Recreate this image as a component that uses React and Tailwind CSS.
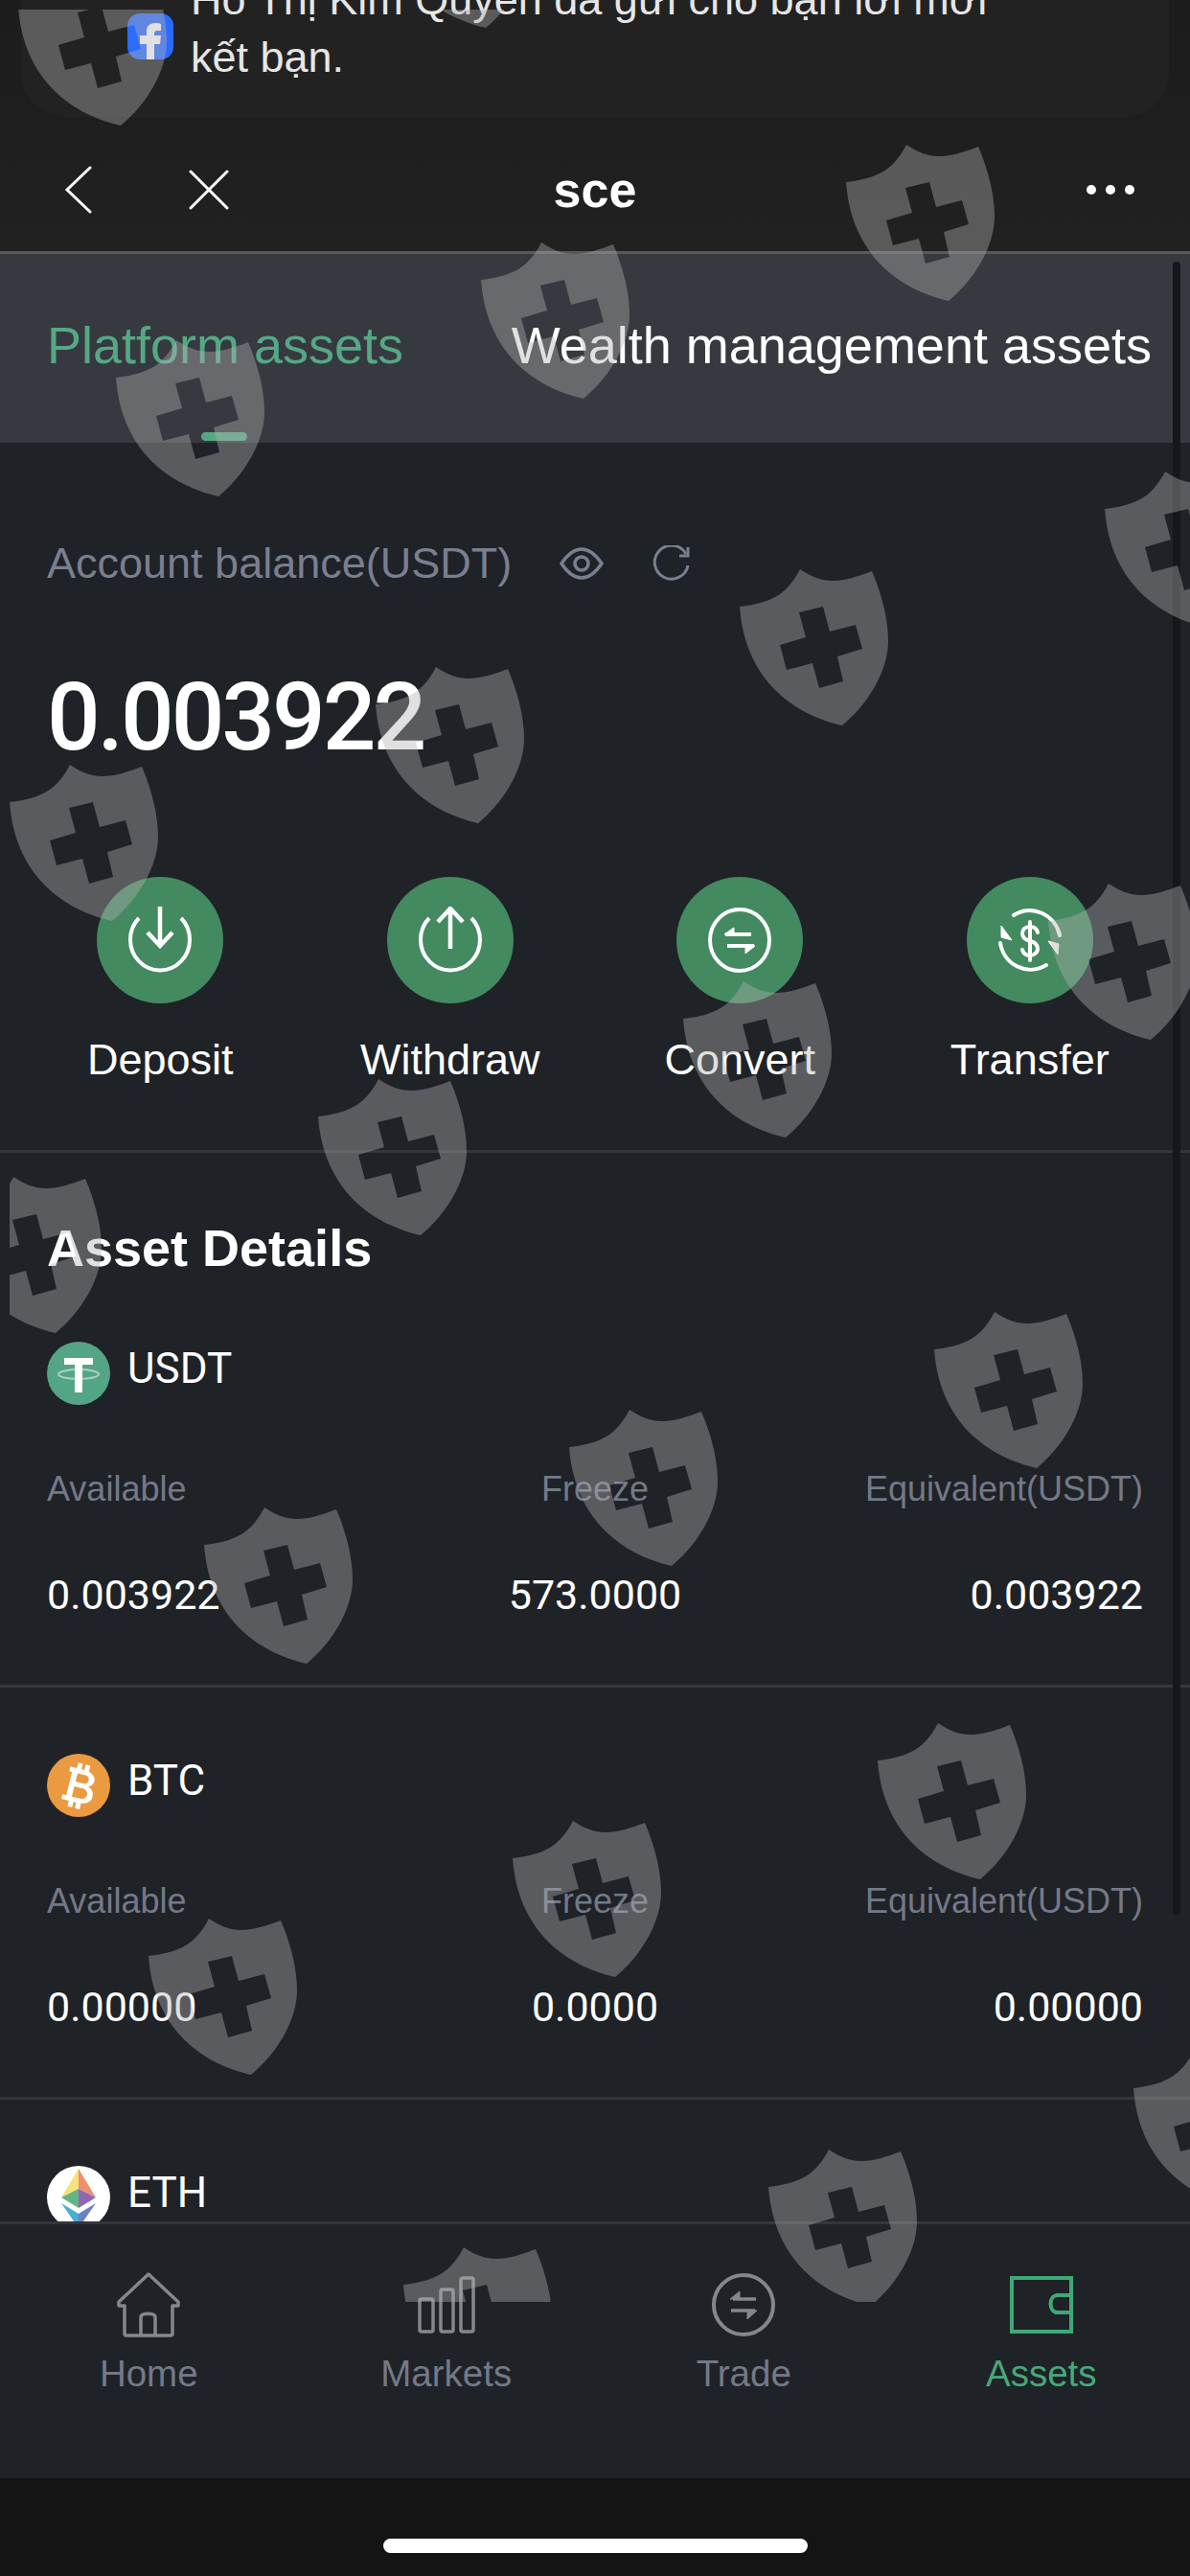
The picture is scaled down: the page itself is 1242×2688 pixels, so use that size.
const shields = [
  [19, -32], [400, -134],
  [883, 151], [502, 253], [121, 355],
  [1153, 492], [772, 594], [392, 696], [10, 798],
  [1094, 922], [713, 1024], [332, 1126], [-49, 1228],
  [975, 1369], [594, 1471], [213, 1573],
  [916, 1798], [535, 1900], [155, 2002],
  [1183, 2140], [802, 2243], [421, 2345],
];

function Shield({ x, y }) {
  return (
    <svg className="absolute" width="156" height="164" viewBox="0 0 156 164" style={{ left: x - 10, top: y - 10 }}>
      <path
        fillRule="evenodd"
        fill="rgb(177,177,177)"
        fillOpacity="0.4"
        d="M63 0C75 8 85 12 97 12C110 12 125 7 138 2C150 30 155 55 155 75C155 105 135 140 107 163C50 150 5 110 0 39C35 35 50 25 63 0ZM62 45L87 39L94 65L121 58L128 83L102 91L108 117L83 124L76 98L49 105L42 79L69 71Z"
      />
    </svg>
  );
}

function ActionIcon({ type }) {
  return (
    <svg width="66" height="70" viewBox="0 0 66 70" fill="none" stroke="white" strokeWidth="4">
      {type === "in" && (
        <>
          <path d="M11 12A31 32 0 1 0 55 12" />
          <path d="M33 0V41M20 27L33 41L46 27" strokeWidth="4.500" />
        </>
      )}
      {type === "out" && (
        <>
          <path d="M11 12A31 32 0 1 0 55 12" />
          <path d="M33 44V2M20 16L33 2L46 16" strokeWidth="4.500" />
        </>
      )}
      {type === "swap" && (
        <>
          <ellipse cx="33" cy="35" rx="31" ry="32" />
          <path d="M18 29H45" />
          <path d="M17 29L27 22V29Z" fill="white" strokeWidth="1" />
          <path d="M20 41H48" />
          <path d="M49 41L39 49V41Z" fill="white" strokeWidth="1" />
        </>
      )}
      {type === "dollar" && (
        <>
          <path strokeLinecap="round" d="M16 9A32 33 0 0 1 64 30" />
          <path d="M63 39L52 36L62 50Z" fill="white" strokeWidth="1" />
          <path strokeLinecap="round" d="M50 61A32 33 0 0 1 2 38" />
          <path d="M3 20L14 35L3 32Z" fill="white" strokeWidth="1" />
          <path strokeLinecap="round" d="M41 27C40 22 37 21 33 21C28 21 25 24 25 28C25 33 29 35 33 36C38 37 41 40 41 44C41 48 37 51 33 51C29 51 26 49 25 45M33 16V56" />
        </>
      )}
    </svg>
  );
}

function Action({ label, type }) {
  return (
    <div className="flex flex-col items-center">
      <div className="flex h-[132px] w-[132px] items-center justify-center rounded-full bg-[#438a60]">
        <ActionIcon type={type} />
      </div>
      <div className="mt-[33px] text-[45px] leading-[52px] text-white">{label}</div>
    </div>
  );
}

function CoinIcon({ coin }) {
  if (coin === "USDT") {
    return (
      <svg width="66" height="66" viewBox="0 0 66 66">
        <circle cx="33" cy="33" r="33" fill="#53a585" />
        <ellipse cx="33" cy="34" rx="21" ry="5" fill="none" stroke="white" strokeOpacity="0.5" strokeWidth="2" />
        <path d="M18 17H48V24H37V53H29V24H18Z" fill="white" />
      </svg>
    );
  }
  if (coin === "BTC") {
    return (
      <svg width="66" height="66" viewBox="0 0 66 66">
        <circle cx="33" cy="33" r="33" fill="#ea9a40" />
        <g transform="rotate(14 33 33)">
          <path fillRule="evenodd" fill="white" d="M20 16H27V10H32V16H35V10H40V16.5C45 18 48 21 48 25C48 28 46 31 43 32C47 33 50 36 50 41C50 47 45 50 40 50.500V57H35V51H32V57H27V51H19V46H23V21H20ZM29 21V30H37C40 30 42 28 42 25.500C42 23 40 21 37 21ZM29 35V46H38C41 46 44 44 44 40.500C44 37 41 35 38 35Z" />
        </g>
      </svg>
    );
  }
  return (
    <svg width="66" height="66" viewBox="0 0 66 66">
      <circle cx="33" cy="33" r="33" fill="white" />
      <path d="M33 3L15 33L33 24Z" fill="#f6e27a" />
      <path d="M33 3L51 33L33 24Z" fill="#ef8f70" />
      <path d="M15 33L33 24V44Z" fill="#63b583" />
      <path d="M51 33L33 24V44Z" fill="#8f68b5" />
      <path d="M15 39L33 50V65L15 39Z" fill="#49aed6" />
      <path d="M51 39L33 50V65Z" fill="#6c80c4" />
    </svg>
  );
}

function CoinHead({ coin }) {
  return (
    <div className="flex h-[66px] items-center gap-[18px]">
      <CoinIcon coin={coin} />
      <span className="-mt-[10px] font-['Roboto',sans-serif] text-[44px] leading-[50px] text-white">{coin}</span>
    </div>
  );
}

function AssetRow({ coin, available, freeze, equivalent }) {
  return (
    <div className="h-[430px] border-b-[3px] border-[#33373c] px-[49px] pt-[69px]">
      <CoinHead coin={coin} />
      <div className="mt-[66px] grid grid-cols-3 text-[36px] leading-[44px] text-[#747988]">
        <div>Available</div>
        <div className="text-center">Freeze</div>
        <div className="text-right">Equivalent(USDT)</div>
      </div>
      <div className="mt-[65px] grid grid-cols-3 font-['Roboto',sans-serif] text-[43px] leading-[46px] text-white">
        <div>{available}</div>
        <div className="text-center">{freeze}</div>
        <div className="text-right">{equivalent}</div>
      </div>
    </div>
  );
}

function NavIcon({ name }) {
  if (name === "Home") {
    return (
      <svg width="68" height="68" viewBox="0 0 68 68" fill="none" stroke="#85878c" strokeWidth="3.500">
        <path d="M34 2L3 31V35H9V64C9 66 10 66 11 66H57C58 66 59 66 59 64V35H65V31Z" strokeLinejoin="round" />
        <path d="M26 66V47C26 42 41 42 41 47V66" />
      </svg>
    );
  }
  if (name === "Markets") {
    return (
      <svg width="60" height="60" viewBox="0 0 60 60" fill="none" stroke="#85878c" strokeWidth="3.500">
        <rect x="2" y="24" width="14" height="34" rx="2" />
        <rect x="24" y="14" width="13" height="44" rx="2" />
        <rect x="45" y="2" width="13" height="56" rx="2" />
      </svg>
    );
  }
  if (name === "Trade") {
    return (
      <svg width="66" height="66" viewBox="0 0 66 66" fill="none" stroke="#85878c" strokeWidth="4">
        <circle cx="33" cy="33" r="31" />
        <path d="M22 27H46" strokeWidth="3.500" />
        <path d="M19 27L29 19V27Z" fill="#85878c" strokeWidth="1" />
        <path d="M20 39H45" strokeWidth="3.500" />
        <path d="M47 39L37 48V39Z" fill="#85878c" strokeWidth="1" />
      </svg>
    );
  }
  return (
    <svg width="66" height="60" viewBox="0 0 66 60" fill="none" stroke="#3fa877" strokeWidth="4">
      <rect x="2" y="2" width="62" height="56" />
      <path d="M64 20H50C40 20 40 38 50 38H64" />
    </svg>
  );
}

function NavItem({ name, active }) {
  return (
    <div className="flex flex-col items-center">
      <div className="flex h-[68px] items-center justify-center">
        <NavIcon name={name} />
      </div>
      <div className={active ? "mt-[15px] text-[38.500px] leading-[46px] text-[#47a87a]" : "mt-[15px] text-[38.500px] leading-[46px] text-[#747988]"}>
        {name}
      </div>
    </div>
  );
}

export default function App() {
  return (
    <div className="relative flex h-[2688px] w-[1242px] flex-col overflow-hidden bg-[#1f2227] font-['Liberation_Sans',Arial,sans-serif]">
      {/* top: notification and title bar */}
      <div className="h-[262px] shrink-0 bg-linear-to-b from-[#1c1c1c] to-[#212121]">
        <div className="mx-[22px] flex h-[122px] gap-[18px] overflow-hidden rounded-b-[46px] bg-[#222222] pl-[111px]">
          <svg className="mt-[14px] shrink-0" width="48" height="48" viewBox="0 0 48 48">
            <rect width="48" height="48" rx="13" fill="#2d6bff" />
            <path fill="white" d="M20 48V32H13V23H20V18C20 13 24 10 29 10C32 10 34 10.500 35 11V18H31C29 18 28 19 28 21V23H35L34 32H28V48Z" />
          </svg>
          <div className="-mt-[30px] text-[45px] leading-[60px] text-[#e6e6e6]">
            Hồ Thị Kim Quyên đã gửi cho bạn lời mời
            <br />
            kết bạn.
          </div>
        </div>
        <div className="relative flex h-[140px] items-center justify-between pl-[67px] pr-[58px] pt-[12px]">
          <div className="flex items-center gap-[100px]">
            <svg width="30" height="50" viewBox="0 0 30 50" fill="none" stroke="white" strokeWidth="3" strokeLinecap="round">
              <path d="M27 2L3 25L27 48" />
            </svg>
            <svg width="42" height="42" viewBox="0 0 42 42" fill="none" stroke="white" strokeWidth="3" strokeLinecap="round">
              <path d="M2 2L40 40M40 2L2 40" />
            </svg>
          </div>
          <div className="absolute left-0 right-0 text-center text-[52px] font-bold leading-[64px] text-white">sce</div>
          <div className="flex items-center gap-[10px]">
            <span className="h-[10px] w-[10px] rounded-full bg-white" />
            <span className="h-[10px] w-[10px] rounded-full bg-white" />
            <span className="h-[10px] w-[10px] rounded-full bg-white" />
          </div>
        </div>
      </div>

      {/* tabs */}
      <div className="relative h-[200px] shrink-0 border-t-[3px] border-[#56585c] bg-[#363a40]">
        <div className="flex items-center justify-between pl-[49px] pr-[40px] pt-[63px]">
          <span className="text-[54px] leading-[64px] text-[#55a884]">Platform assets</span>
          <span className="text-[54px] leading-[64px] text-white">Wealth management assets</span>
        </div>
        <div className="absolute bottom-[2px] left-[210px] h-[9px] w-[48px] rounded-full bg-[#55a884]" />
      </div>

      {/* balance */}
      <div className="h-[741px] shrink-0 border-b-[3px] border-[#33373c]">
        <div className="flex items-center pl-[49px] pt-[100px]">
          <span className="text-[45px] leading-[52px] text-[#7a7f8f]">Account balance(USDT)</span>
          <svg className="ml-[50px]" width="46" height="34" viewBox="0 0 46 34" fill="none" stroke="#7a7f8f" strokeWidth="3.500">
            <path d="M2 17C10 5 17 2 23 2C29 2 36 5 44 17C36 29 29 32 23 32C17 32 10 29 2 17Z" />
            <circle cx="23" cy="17" r="7" />
          </svg>
          <svg className="ml-[50px]" width="40" height="38" viewBox="0 0 40 38" fill="none" stroke="#7a7f8f" strokeWidth="3">
            <path d="M36 9A17.500 17.500 0 1 0 38 21" />
            <path d="M38 2V11H29" />
          </svg>
        </div>
        <div className="mt-[80px] pl-[49px] font-['Roboto',sans-serif] text-[98px] font-medium leading-[110px] tracking-[-3px] text-white">0.003922</div>
        <div className="mt-[111px] grid grid-cols-4 px-[16px]">
          <Action label="Deposit" type="in" />
          <Action label="Withdraw" type="out" />
          <Action label="Convert" type="swap" />
          <Action label="Transfer" type="dollar" />
        </div>
      </div>

      {/* asset list, cut off by the bottom nav */}
      <div className="min-h-0 flex-1 overflow-hidden">
        <div className="h-[128px] pl-[49px] pt-[68px] text-[54px] font-bold leading-[62px] text-white">Asset Details</div>
        <AssetRow coin="USDT" available="0.003922" freeze="573.0000" equivalent="0.003922" />
        <AssetRow coin="BTC" available="0.00000" freeze="0.0000" equivalent="0.00000" />
        <div className="px-[49px] pt-[69px]">
          <CoinHead coin="ETH" />
        </div>
      </div>

      {/* bottom nav */}
      <div className="grid h-[268px] shrink-0 grid-cols-4 border-t-[3px] border-[#33373c] pt-[50px]">
        <NavItem name="Home" />
        <NavItem name="Markets" />
        <NavItem name="Trade" />
        <NavItem name="Assets" active />
      </div>
      <div className="flex h-[102px] shrink-0 justify-center bg-[#141414] pt-[63px]">
        <div className="h-[15px] w-[443px] rounded-full bg-white" />
      </div>

      {/* scrollbar */}
      <div className="absolute right-[10px] top-[273px] h-[1725px] w-[8px] rounded-full bg-[#15171a]" />

      {/* watermark over everything */}
      <div className="pointer-events-none absolute bottom-[286px] left-[10px] right-0 top-[10px] overflow-hidden">
        {shields.map(([x, y]) => (
          <Shield key={`${x}-${y}`} x={x} y={y} />
        ))}
      </div>
    </div>
  );
}
